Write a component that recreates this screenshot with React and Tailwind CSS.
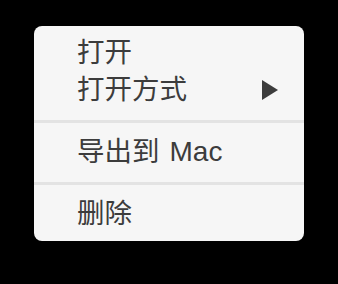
import React from 'react';

const font = { fontFamily: '"Liberation Sans", "Noto Sans CJK SC", sans-serif' };

const Item = ({ children, submenu = false }) => (
  <div className="flex h-[37px] items-center justify-between pl-[43px] pr-[26px] text-[27.5px] leading-none text-[#3c3c3c]">
    <span>{children}</span>
    {submenu && (
      <svg width="16" height="20" viewBox="0 0 16 20" className="shrink-0">
        <polygon points="0,0 16,10 0,20" fill="#3c3c3c" />
      </svg>
    )}
  </div>
);

const Separator = () => <div className="mt-[12px] mb-[10px] h-[3px] bg-[#e3e3e3]" />;

const App = () => {
  return (
    <div className="min-h-[284px] w-[338px] bg-black pl-[34px] pt-[26px]" style={font}>
      <div className="w-[270px] rounded-[8px] bg-[#f6f6f6] pt-[8px] pb-[9px]">
        <Item>打开</Item>
        <Item submenu>打开方式</Item>
        <Separator />
        <Item>
          导出到<span className="ml-[10px] text-[28px]">Mac</span>
        </Item>
        <Separator />
        <Item>删除</Item>
      </div>
    </div>
  );
};

export default App;
